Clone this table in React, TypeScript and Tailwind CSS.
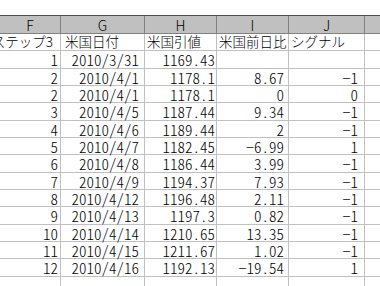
import React from "react";

const rows: string[][] = [
  ["1", "2010/3/31", "1169.43", "", ""],
  ["2", "2010/4/1", "1178.1", "8.67", "−1"],
  ["2", "2010/4/1", "1178.1", "0", "0"],
  ["3", "2010/4/5", "1187.44", "9.34", "−1"],
  ["4", "2010/4/6", "1189.44", "2", "−1"],
  ["5", "2010/4/7", "1182.45", "−6.99", "1"],
  ["6", "2010/4/8", "1186.44", "3.99", "−1"],
  ["7", "2010/4/9", "1194.37", "7.93", "−1"],
  ["8", "2010/4/12", "1196.48", "2.11", "−1"],
  ["9", "2010/4/13", "1197.3", "0.82", "−1"],
  ["10", "2010/4/14", "1210.65", "13.35", "−1"],
  ["11", "2010/4/15", "1211.67", "1.02", "−1"],
  ["12", "2010/4/16", "1192.13", "−19.54", "1"],
];

const heights = ["h-[17px]", "h-[18px]", "h-[17px]"];

const font = "[font-family:'Noto_Sans_CJK_JP',sans-serif] font-light";
const num = "text-[15px] [font-feature-settings:'hwid']";

function Row({ cells, h }: { cells: string[]; h: string }) {
  return (
    <div className={`flex ${h} border-b border-[#c0c0c0]`}>
      <div className={`w-[61px] shrink-0 border-r border-[#c0c0c0] flex items-center justify-end pr-[2px] ${num}`}>{cells[0]}</div>
      <div className={`w-[84px] shrink-0 border-r border-[#c0c0c0] flex items-center justify-end pr-[5px] ${num}`}>{cells[1]}</div>
      <div className={`w-[72px] shrink-0 border-r border-[#c0c0c0] flex items-center justify-end pr-[1px] ${num}`}>{cells[2]}</div>
      <div className={`w-[72px] shrink-0 border-r border-[#c0c0c0] flex items-center justify-end pr-[4px] ${num}`}>{cells[3]}</div>
      <div className={`w-[76px] shrink-0 border-r border-[#c0c0c0] flex items-center justify-end pr-[6px] ${num}`}>{cells[4]}</div>
      <div className="flex-1" />
    </div>
  );
}

export default function App() {
  return (
    <div className={`w-[380px] h-[286px] overflow-hidden bg-white text-black leading-none ${font}`}>
      <div className="h-[15px]" />
      <div className="flex h-[19px] bg-[#c0c0c0] border-t border-b border-t-[#505050] border-b-[#808080] text-[14px]">
        <div className="w-[61px] shrink-0 border-r border-[#808080] flex items-center justify-center">F</div>
        <div className="w-[84px] shrink-0 border-r border-[#808080] flex items-center justify-center">G</div>
        <div className="w-[72px] shrink-0 border-r border-[#808080] flex items-center justify-center">H</div>
        <div className="w-[72px] shrink-0 border-r border-[#808080] flex items-center justify-center">I</div>
        <div className="w-[76px] shrink-0 border-r border-[#808080] flex items-center justify-center">J</div>
        <div className="flex-1" />
      </div>
      <div className="flex h-[17px] border-b border-[#c0c0c0] text-[13.5px] whitespace-nowrap">
        <div className="w-[61px] shrink-0 border-r border-[#c0c0c0] flex items-center justify-end pr-[7px] overflow-hidden">
          <span className="shrink-0">2ステップ3</span>
        </div>
        <div className="w-[84px] shrink-0 border-r border-[#c0c0c0] flex items-center pl-[4px]">米国日付</div>
        <div className="w-[72px] shrink-0 border-r border-[#c0c0c0] flex items-center pl-[2px]">米国引値</div>
        <div className="w-[72px] shrink-0 border-r border-[#c0c0c0] flex items-center pl-[2px]">米国前日比</div>
        <div className="w-[76px] shrink-0 border-r border-[#c0c0c0] flex items-center pl-[2px]">シグナル</div>
        <div className="flex-1" />
      </div>
      {rows.map((r, i) => (
        <Row key={i} cells={r} h={heights[(i + 1) % 3]} />
      ))}
      <Row cells={["", "", "", "", ""]} h="h-[17px]" />
    </div>
  );
}
